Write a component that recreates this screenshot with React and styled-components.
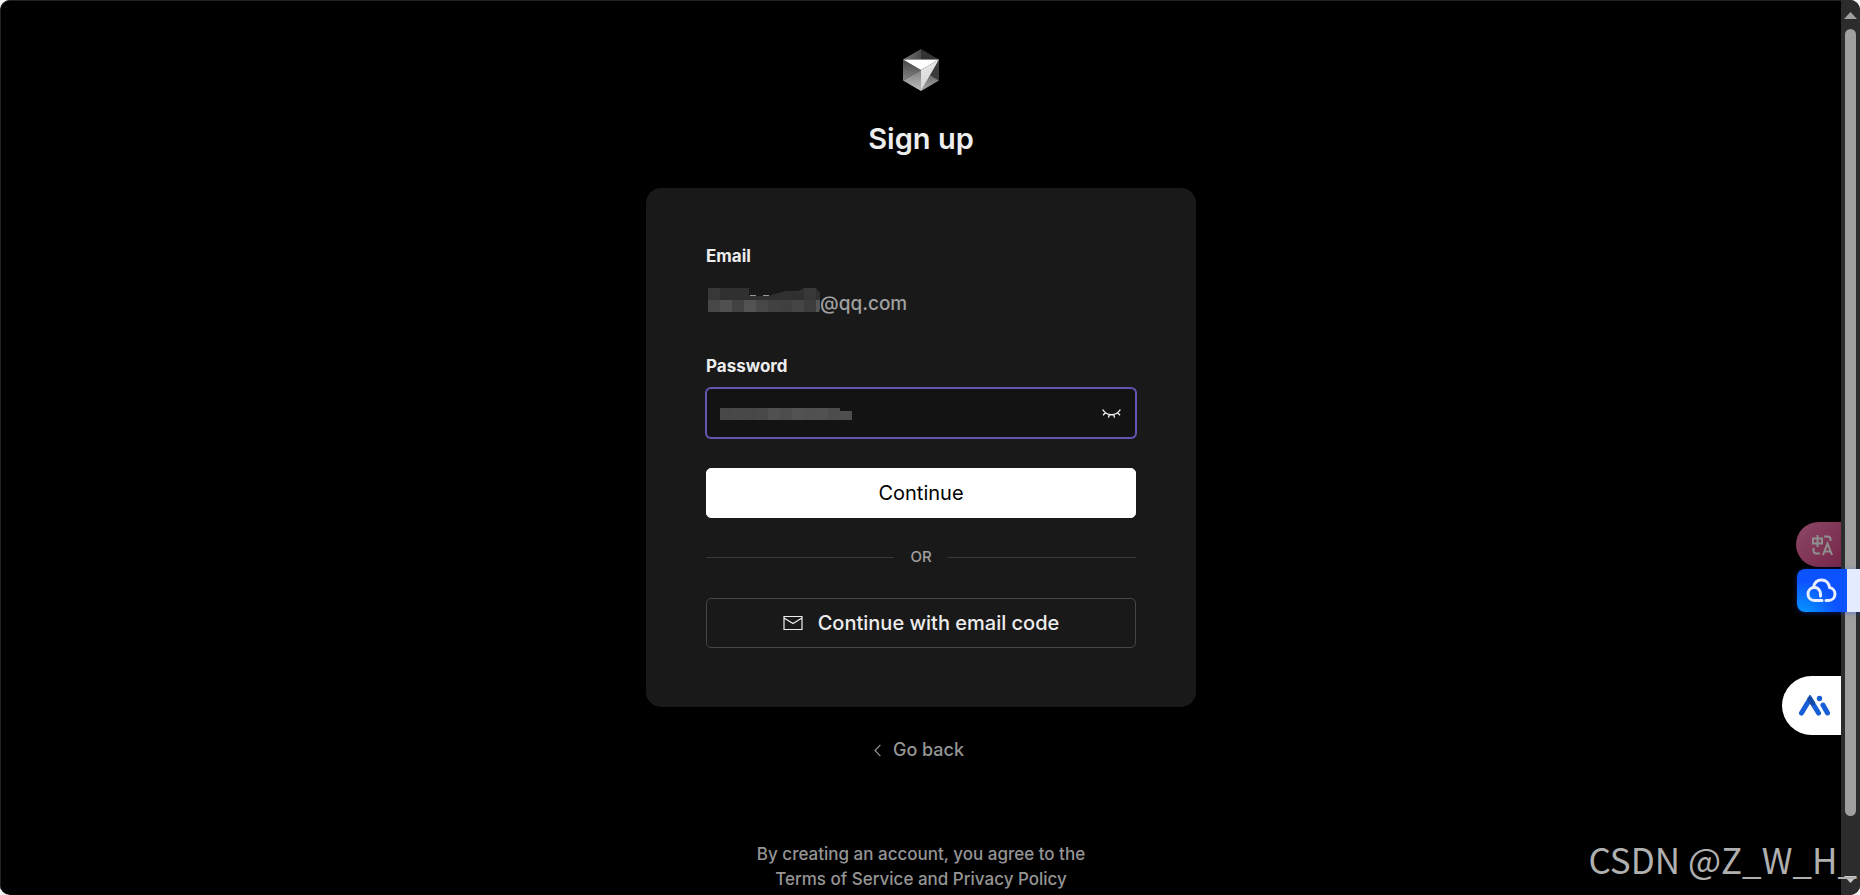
import React, { useState } from "react";
import styled, { createGlobalStyle } from "styled-components";

const COLOR_PAGE = "#000000";
const COLOR_FRAME = "#222222";
const COLOR_CARD = "#191919";
const COLOR_FIELD = "#131313";
const COLOR_TEXT = "#ededed";
const COLOR_MUTED = "#a0a0a0";
const COLOR_SUBTLE = "#959595";
const COLOR_LINE = "#3a3a3a";
const COLOR_ACCENT = "#6654b0";

const GlobalStyle = createGlobalStyle`
	* {
		box-sizing: border-box;
	}
	body {
		margin: 0;
		background: #f4f4f4;
		font-family: Inter, "Liberation Sans", sans-serif;
	}
	button, input {
		font-family: inherit;
	}
`;

const Window = styled.div`
	position: relative;
	display: flex;
	height: 100vh;
	overflow: hidden;
	background: ${COLOR_PAGE};
	border-radius: 10px;
`;

const Main = styled.main`
	flex: 1;
	display: flex;
	flex-direction: column;
	align-items: center;
	padding-top: 48px;
	border: 1px solid ${COLOR_FRAME};
	border-width: 1px 0 0 1px;
	border-top-left-radius: 10px;
`;

const Title = styled.h1`
	margin: 28px 0 0;
	font-size: 29px;
	line-height: 40px;
	font-weight: 600;
	color: ${COLOR_TEXT};
`;

const Card = styled.form`
	display: flex;
	flex-direction: column;
	width: 100%;
	max-width: 550px;
	margin-top: 29px;
	padding: 56px 60px 59px;
	background: ${COLOR_CARD};
	border-radius: 15px;
`;

const Label = styled.label`
	font-size: 17px;
	line-height: 24px;
	font-weight: 700;
	color: ${COLOR_TEXT};
`;

const EmailValue = styled.output`
	display: flex;
	align-items: center;
	height: 50px;
	margin: 10px 0 26px;
	padding-left: 2px;
	font-size: 19px;
	font-weight: 500;
	color: ${COLOR_MUTED};
`;

const Field = styled.div`
	position: relative;
	display: flex;
	align-items: center;
	height: 50px;
	margin-top: 10px;
	padding-right: 14px;
	background: ${COLOR_FIELD};
	border: 1px solid ${COLOR_ACCENT};
	border-radius: 5px;
	box-shadow: 0 0 0 1px ${COLOR_ACCENT};
`;

const Input = styled.input`
	flex: 1;
	height: 48px;
	padding: 0 14px;
	background: none;
	border: none;
	color: ${COLOR_TEXT};
	font-size: 20px;
	&:focus {
		outline: 0;
	}
`;

const MaskOverlay = styled.div`
	position: absolute;
	left: 13px;
	top: 19px;
	display: flex;
	pointer-events: none;
`;

const IconButton = styled.button`
	display: flex;
	padding: 0;
	background: none;
	border: none;
	color: ${COLOR_TEXT};
	cursor: pointer;
`;

const Button = styled.button`
	display: flex;
	align-items: center;
	justify-content: center;
	gap: 15px;
	height: 50px;
	border-radius: 5px;
	border: 1px solid ${({ $outline }) => ($outline ? "#464646" : "#ffffff")};
	background: ${({ $outline }) => ($outline ? "none" : "#ffffff")};
	color: ${({ $outline }) => ($outline ? COLOR_TEXT : "#000000")};
	font-size: 20px;
	font-weight: ${({ $outline }) => ($outline ? 500 : 400)};
	cursor: pointer;
`;

const SubmitButton = styled(Button)`
	margin-top: 30px;
`;

const Divider = styled.div`
	display: flex;
	align-items: center;
	gap: 16px;
	margin: 27px 0 29px;
	font-size: 15px;
	line-height: 24px;
	font-weight: 500;
	color: ${COLOR_MUTED};
	&::before,
	&::after {
		content: "";
		flex: 1;
		height: 1px;
		background: ${COLOR_LINE};
	}
`;

const BackLink = styled.a`
	display: flex;
	align-items: center;
	gap: 12px;
	margin: 30px 0 0;
	padding-right: 4px;
	font-size: 18px;
	line-height: 26px;
	font-weight: 500;
	color: ${COLOR_SUBTLE};
	text-decoration: none;
`;

const Terms = styled.p`
	max-width: 360px;
	margin: 79px 0 0;
	font-size: 17px;
	line-height: 25px;
	font-weight: 500;
	color: ${COLOR_SUBTLE};
	text-align: center;
`;

const TermsLink = styled.a`
	color: inherit;
	text-decoration: none;
`;

const Scrollbar = styled.aside`
	display: flex;
	flex-direction: column;
	align-items: center;
	width: 19px;
	padding: 12px 0;
	background: #2c2c2c;
`;

const Thumb = styled.div`
	flex: 1;
	width: 11px;
	margin: 10px 0 60px;
	border-radius: 6px;
	background: #9f9f9f;
`;

const SideTools = styled.nav`
	position: absolute;
	top: 522px;
	right: 0;
	display: flex;
	flex-direction: column;
	align-items: flex-end;
`;

const SideButton = styled.button`
	display: flex;
	align-items: center;
	padding: 0;
	border: none;
	cursor: pointer;
`;

const TranslateButton = styled(SideButton)`
	width: 45px;
	height: 45px;
	margin-right: 19px;
	padding-left: 15px;
	border-radius: 23px 0 0 23px;
	background: linear-gradient(135deg, #8d4866, #75264a);
`;

const CloudButton = styled(SideButton)`
	width: 63px;
	height: 43px;
	margin-top: 2px;
	padding-left: 9px;
	border-right: 13px solid #e5ebff;
	border-radius: 8px 0 0 8px;
	background: radial-gradient(circle at 10% 110%, #059cff, #0d52ff 55%);
	box-shadow: 0 1px 5px rgba(20, 80, 255, 0.4);
`;

const AssistantButton = styled(SideButton)`
	width: 59px;
	height: 59px;
	margin: 64px 19px 0 0;
	padding-left: 16px;
	border-radius: 30px 0 0 30px;
	background: #ffffff;
`;

const Watermark = styled.div`
	position: absolute;
	right: 3px;
	bottom: 14px;
	font-family: "Noto Sans CJK SC", sans-serif;
	font-size: 35px;
	line-height: 44px;
	color: #b0b0b0;
	pointer-events: none;
`;

const Logo = () => (
	<svg width="36" height="42" viewBox="0 0 36 42" aria-hidden="true">
		<defs>
			<linearGradient id="topLeft" x1="0" y1="0" x2="1" y2="0">
				<stop offset="0" stopColor="#777" />
				<stop offset="1" stopColor="#4c4c4c" />
			</linearGradient>
			<linearGradient id="left" x1="0" y1="0" x2="0" y2="1">
				<stop offset="0" stopColor="#454545" />
				<stop offset="1" stopColor="#858585" />
			</linearGradient>
			<linearGradient id="bottomLeft" x1="0" y1="0" x2="0" y2="1">
				<stop offset="0" stopColor="#7c7c7c" />
				<stop offset="1" stopColor="#c0c0c0" />
			</linearGradient>
			<linearGradient id="bottomRight" x1="0" y1="0" x2="0" y2="1">
				<stop offset="0" stopColor="#666" />
				<stop offset="1" stopColor="#b0b0b0" />
			</linearGradient>
			<linearGradient id="front" x1="0" y1="0" x2="0" y2="1">
				<stop offset="0" stopColor="#e8e8e8" />
				<stop offset="1" stopColor="#d6d6d6" />
			</linearGradient>
		</defs>
		<path d="M18 0 0 10.5h18z" fill="url(#topLeft)" />
		<path d="M18 0v10.5h18z" fill="#333" />
		<path d="M0 10.5 18 21 0 31.5z" fill="url(#left)" />
		<path d="M0 31.5 18 21v21z" fill="url(#bottomLeft)" />
		<path d="M36 10.5v21L27 26z" fill="#3b3b3b" />
		<path d="M36 31.5 27 26 18 42z" fill="url(#bottomRight)" />
		<path d="M36 10.5 18 42V21z" fill="url(#front)" />
		<path d="M0 10.5h36L18 21z" fill="#fff" />
	</svg>
);

const EMAIL_CELLS = [
	"#484848",
	"#505050",
	"#424242",
	"#525252",
	"#474747",
	"#414141",
	"#404040",
	"#454545",
	"#3c3c3c"
];

const EmailMask = () => (
	<svg width="112" height="30" viewBox="0 0 112 30" aria-label="Hidden">
		<path d="M0 0h41v8h19l17-5h13l6-3h12l5 6v7H0z" fill="#303030" />
		<path d="M0 0h12v12H0zM96 0h12v12H96z" fill="#383838" />
		<path d="M42 7h6v1h-6zM55 7h6v1h-6z" fill="#999" />
		{EMAIL_CELLS.map((color, i) => (
			<rect key={i} x={i * 12} y="12" width="12" height="12" fill={color} />
		))}
		<path d="M108 12h4v9l-1 3h-3z" fill="#555" />
	</svg>
);

const PASSWORD_CELLS = [
	"#474747",
	"#484848",
	"#474747",
	"#494949",
	"#505050",
	"#4d4d4d",
	"#525252",
	"#505050",
	"#515151",
	"#4c4c4c"
];

const PasswordMask = () => (
	<svg width="132" height="12" viewBox="0 0 132 12" aria-hidden="true">
		{PASSWORD_CELLS.map((color, i) => (
			<rect key={i} x={i * 12} width="12" height="12" fill={color} />
		))}
		<rect x="119" y="3" width="13" height="9" fill="#4e4e4e" />
	</svg>
);

const EyeClosedIcon = () => (
	<svg width="19" height="19" viewBox="0 0 19 19" fill="none" stroke="currentColor" strokeWidth="1.4">
		<path d="M.6 5.5C5 12.5 14 12.5 18.4 5.5M3.4 8.8 1 11.2M7.2 10.7l-.7 3M11.8 10.7l.7 3M15.6 8.8l2.4 2.4" />
	</svg>
);

const MailIcon = () => (
	<svg width="20" height="16" viewBox="0 0 20 16" fill="none" stroke="currentColor" strokeWidth="1.2">
		<path d="M1 1.5h18v13H1zM1 3l9 5.5L19 3" />
	</svg>
);

const ChevronIcon = () => (
	<svg width="7" height="13" viewBox="0 0 7 13" fill="none" stroke="currentColor" strokeWidth="1.2">
		<path d="M6.4.8 1 6.5l5.4 5.7" />
	</svg>
);

const TranslateIcon = () => (
	<svg width="23" height="22" viewBox="0 0 23 22" fill="none" stroke="#8f8f8f" strokeWidth="2">
		<path d="M2 4.5h9v5H2zM6.5 1v12M13 2.5h3.5q3 0 3 3V7M2.5 14v2.5q0 3 3 3H9" />
		<path d="M12 21l4.5-11.5L21 21M13.5 17.500h6" />
	</svg>
);

const CloudIcon = () => (
	<svg
		width="31"
		height="25"
		viewBox="0 0 31 25"
		fill="none"
		stroke="#eaf0ff"
		strokeWidth="3"
		strokeLinecap="round"
		strokeLinejoin="round"
	>
		<path d="M16 22.5H8.5C4.5 22.5 2 19.5 2 16c0-4 3-6.500 6.500-6.500s6 3 6 6.500v2" />
		<path d="M7.5 9C8.5 4.500 11.500 2 15.500 2c4.500 0 7.500 3 8 7.500 3 .5 5.500 3 5.500 6.500s-2.500 6.500-6.500 6.500H20" />
	</svg>
);

const AssistantIcon = () => (
	<svg width="33" height="22" viewBox="0 0 33 22" fill="none" stroke="#175fd6" strokeWidth="5" strokeLinecap="round">
		<path d="M3.5 18 12 4l8.500 14M25 10l4.500 8" />
		<path d="M12 4l2.500 4" stroke="#154ba6" />
		<circle cx="21.500" cy="3.500" r="2.700" fill="#175fd6" stroke="none" />
	</svg>
);

const ArrowIcon = ({ down }) => (
	<svg width="13" height="7" viewBox="0 0 13 7" fill={down ? "#c8c8c8" : "#9f9f9f"} aria-hidden="true">
		<path d={down ? "M0 0h13L6.500 7z" : "M0 7h13L6.500 0z"} />
	</svg>
);

const App = () => {
	const [isPasswordVisible, setPasswordVisibility] = useState(false);
	return (
		<Window>
			<GlobalStyle />
			<Main>
				<Logo />
				<Title>Sign up</Title>
				<Card onSubmit={e => e.preventDefault()}>
					<Label htmlFor="email">Email</Label>
					<EmailValue id="email">
						<EmailMask />
						@qq.com
					</EmailValue>
					<Label htmlFor="password">Password</Label>
					<Field>
						<Input id="password" type={isPasswordVisible ? "text" : "password"} />
						<MaskOverlay>
							<PasswordMask />
						</MaskOverlay>
						<IconButton
							type="button"
							aria-label="Show password"
							onClick={() => setPasswordVisibility(!isPasswordVisible)}
						>
							<EyeClosedIcon />
						</IconButton>
					</Field>
					<SubmitButton type="submit">Continue</SubmitButton>
					<Divider>OR</Divider>
					<Button type="button" $outline>
						<MailIcon />
						Continue with email code
					</Button>
				</Card>
				<BackLink href="#back">
					<ChevronIcon />
					Go back
				</BackLink>
				<Terms>
					By creating an account, you agree to the{" "}
					<TermsLink href="#terms">Terms of Service</TermsLink> and{" "}
					<TermsLink href="#privacy">Privacy Policy</TermsLink>
				</Terms>
			</Main>
			<Scrollbar>
				<ArrowIcon />
				<Thumb />
				<ArrowIcon down />
			</Scrollbar>
			<SideTools>
				<TranslateButton aria-label="Translate">
					<TranslateIcon />
				</TranslateButton>
				<CloudButton aria-label="Cloud">
					<CloudIcon />
				</CloudButton>
				<AssistantButton aria-label="Assistant">
					<AssistantIcon />
				</AssistantButton>
			</SideTools>
			<Watermark>CSDN @Z_W_H_</Watermark>
		</Window>
	);
};

export default App;
